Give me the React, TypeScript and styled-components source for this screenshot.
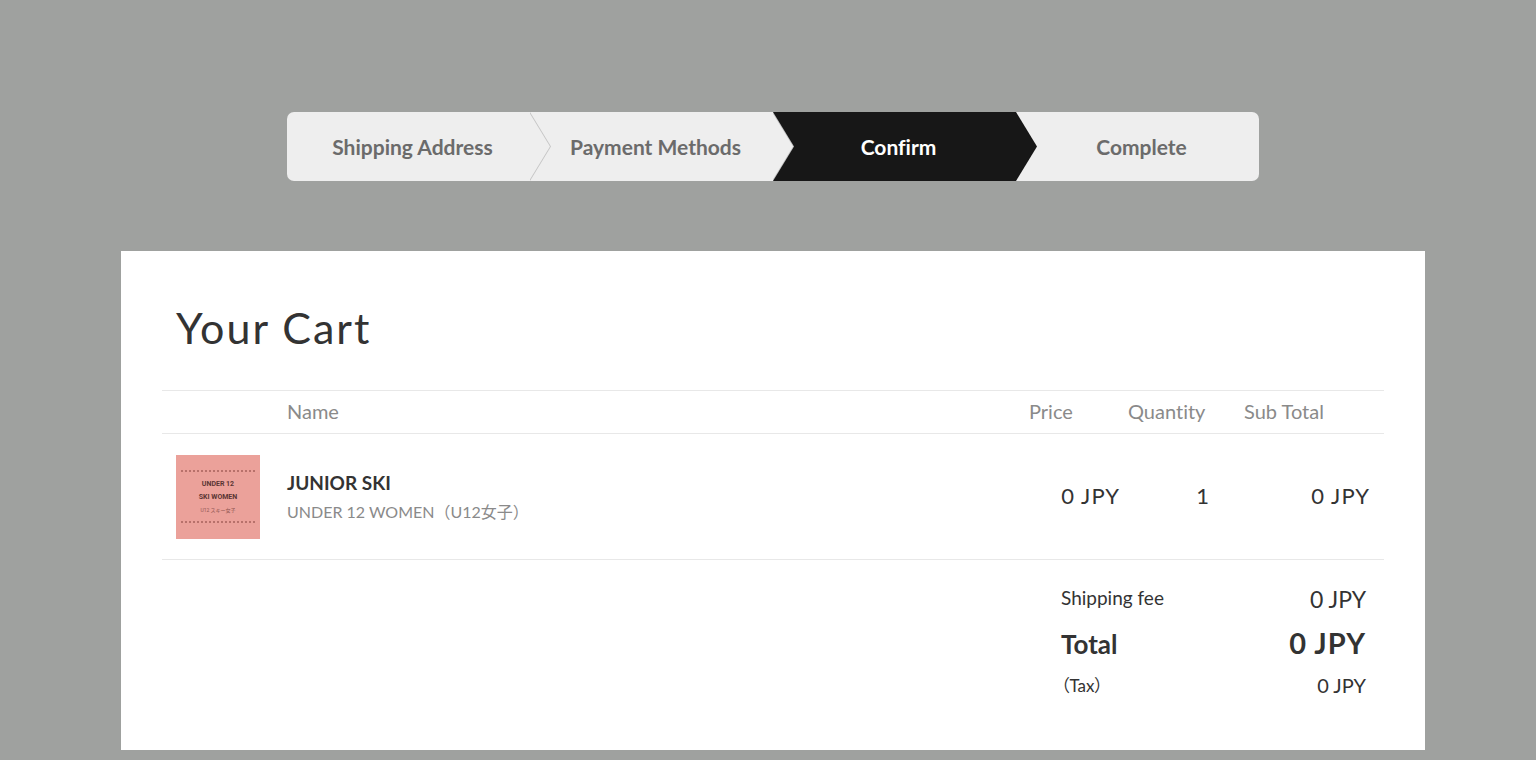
import React from "react";
import styled, { createGlobalStyle, css } from "styled-components";

const GlobalStyle = createGlobalStyle`
  *, *::before, *::after { box-sizing: border-box; }
  body {
    margin: 0;
    background: #9fa19f;
    color: #333;
    font-family: Lato, "Noto Sans CJK JP", sans-serif;
    font-size: 20px;
    line-height: 24px;
    font-variant-ligatures: none;
  }
`;

const Page = styled.main`
  display: flex;
  flex-direction: column;
  align-items: center;
  gap: 70px;
  padding: 112px 111px 10px 121px;
`;

const Steps = styled.ol`
  display: grid;
  grid-template-columns: repeat(4, 1fr);
  width: 100%;
  max-width: 972px;
  margin: 0;
  padding: 0;
  list-style: none;
  border-radius: 7px;
  overflow: hidden;
`;

const Step = styled.li<{ $active?: boolean }>`
  position: relative;
  display: flex;
  align-items: center;
  justify-content: center;
  height: 69px;
  padding-left: 8px;
  background: ${(p) => (p.$active ? "#171717" : "#eee")};
  color: ${(p) => (p.$active ? "#fff" : "#6b6b6b")};
  font-size: 21px;
  font-weight: 700;

  &:not(:last-child)::before,
  &:not(:last-child)::after {
    content: "";
    position: absolute;
    z-index: 1;
    top: 0;
    left: 100%;
    width: 21px;
    height: 100%;
    background: ${(p) => (p.$active ? "#171717" : "#c4c4c4")};
    clip-path: polygon(0 0, 100% 50%, 0 100%);
  }

  &:not(:last-child)::after {
    left: calc(100% - 1px);
    background: ${(p) => (p.$active ? "#171717" : "#eee")};
  }
`;

const Card = styled.section`
  width: 100%;
  padding: 50px 41px 43px;
  background: #fff;
`;

const Title = styled.h1`
  margin: 0 0 35px;
  padding: 0 14px;
  font-size: 43px;
  line-height: 54px;
  font-weight: 400;
  letter-spacing: 2px;
`;

const CartTable = styled.table`
  width: 100%;
  table-layout: fixed;
  border-collapse: collapse;
  border-top: 1px solid #e8e8e8;

  tr {
    border-bottom: 1px solid #e8e8e8;
  }
`;

const Column = styled.col<{ $width?: number }>`
  ${(p) =>
    p.$width &&
    css`
      width: ${p.$width}px;
    `}
`;

const Heading = styled.th<{ $left?: number }>`
  height: 43px;
  padding: 0 0 2px ${(p) => p.$left ?? 14}px;
  color: #8a8a8a;
  font-weight: 400;
  text-align: left;
`;

const ItemCell = styled.td`
  height: 126px;
  padding: 0 0 0 14px;
`;

const AmountCell = styled.td<{ $right: number }>`
  padding: 0 ${(p) => p.$right}px 2px 0;
  font-size: 22px;
  letter-spacing: 1px;
  text-align: right;
`;

const ProductName = styled.div`
  font-size: 19px;
  font-weight: 700;
  line-height: 30px;
`;

const ProductVariant = styled.div`
  color: #8a8a8a;
  font-size: 16px;
  line-height: 28px;
`;

const Thumbnail = styled.div`
  display: flex;
  flex-direction: column;
  justify-content: center;
  width: 84px;
  height: 84px;
  padding: 0 5px;
  background: #eba19a;
  color: #5a3533;
  font-family: Roboto, "Noto Sans CJK JP", sans-serif;
  text-align: center;
`;

const ThumbnailLabel = styled.div`
  padding: 6px 0 4px;
  border: dotted #b8716b;
  border-width: 2px 0;
`;

const ThumbnailLine = styled.div<{ $small?: boolean }>`
  font-size: ${(p) => (p.$small ? 5 : 7)}px;
  font-weight: ${(p) => (p.$small ? 400 : 700)};
  line-height: 13px;
  color: ${(p) => (p.$small ? "#8f5652" : "inherit")};
`;

const Totals = styled.table`
  width: 323px;
  margin: 15px 0 0 auto;
  border-collapse: collapse;
`;

type Size = "normal" | "large" | "small";
const labelSize = { normal: 19, large: 26, small: 17 };
const valueSize = { normal: 23, large: 29, small: 20 };
const rowHeight = { normal: 48, large: 42, small: 42 };

const TotalLabel = styled.th<{ $size: Size }>`
  height: ${(p) => rowHeight[p.$size]}px;
  padding: 0 0 ${(p) => (p.$size === "normal" ? 2 : 0)}px;
  font-size: ${(p) => labelSize[p.$size]}px;
  font-weight: ${(p) => (p.$size === "large" ? 700 : 400)};
  font-feature-settings: "palt";
  text-align: left;
`;

const TotalValue = styled.td<{ $size: Size }>`
  padding: 0 18px ${(p) => (p.$size === "normal" ? 0 : 2)}px 0;
  font-size: ${(p) => valueSize[p.$size]}px;
  font-weight: ${(p) => (p.$size === "large" ? 700 : 400)};
  letter-spacing: ${(p) => (p.$size === "large" ? 1 : 0)}px;
  text-align: right;
`;

const totals: { label: string; value: string; size: Size }[] = [
  { label: "Shipping fee", value: "0 JPY", size: "normal" },
  { label: "Total", value: "0 JPY", size: "large" },
  { label: "（Tax）", value: "0 JPY", size: "small" },
];

const steps = ["Shipping Address", "Payment Methods", "Confirm", "Complete"];

export default function App() {
  return (
    <>
      <GlobalStyle />
      <Page>
        <Steps>
          {steps.map((step) => (
            <Step
              key={step}
              $active={step === "Confirm"}
              aria-current={step === "Confirm" ? "step" : undefined}
            >
              {step}
            </Step>
          ))}
        </Steps>
        <Card>
          <Title>Your Cart</Title>
          <CartTable>
            <colgroup>
              <Column $width={111} />
              <Column />
              <Column $width={113} />
              <Column $width={102} />
              <Column $width={154} />
            </colgroup>
            <thead>
              <tr>
                <Heading aria-label="Image" />
                <Heading scope="col">Name</Heading>
                <Heading scope="col">Price</Heading>
                <Heading scope="col" $left={0}>Quantity</Heading>
                <Heading scope="col">Sub Total</Heading>
              </tr>
            </thead>
            <tbody>
              <tr>
                <ItemCell>
                  <Thumbnail>
                    <ThumbnailLabel>
                      <ThumbnailLine>UNDER 12</ThumbnailLine>
                      <ThumbnailLine>SKI WOMEN</ThumbnailLine>
                      <ThumbnailLine $small>U12 スキー女子</ThumbnailLine>
                    </ThumbnailLabel>
                  </Thumbnail>
                </ItemCell>
                <ItemCell>
                  <ProductName>JUNIOR SKI</ProductName>
                  <ProductVariant>UNDER 12 WOMEN（U12女子）</ProductVariant>
                </ItemCell>
                <AmountCell $right={8}>0 JPY</AmountCell>
                <AmountCell $right={20}>1</AmountCell>
                <AmountCell $right={14}>0 JPY</AmountCell>
              </tr>
            </tbody>
          </CartTable>
          <Totals>
            <tbody>
              {totals.map((row) => (
                <tr key={row.label}>
                  <TotalLabel scope="row" $size={row.size}>{row.label}</TotalLabel>
                  <TotalValue $size={row.size}>{row.value}</TotalValue>
                </tr>
              ))}
            </tbody>
          </Totals>
        </Card>
      </Page>
    </>
  );
}
